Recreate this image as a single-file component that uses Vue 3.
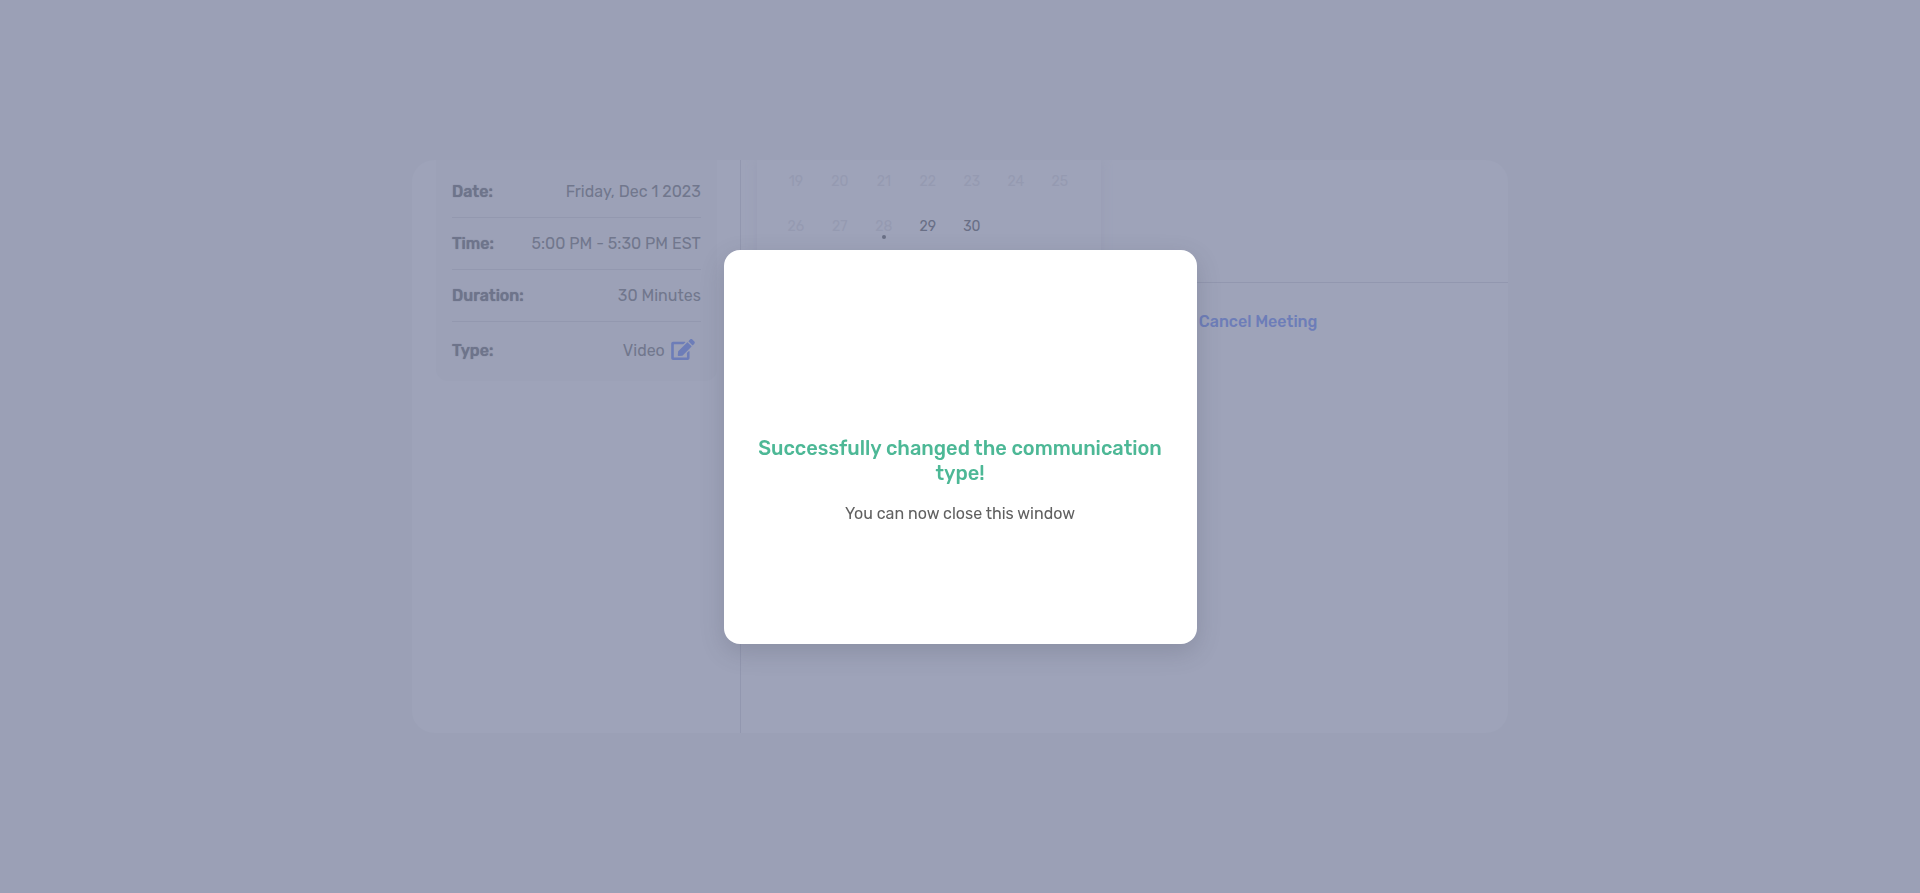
<script setup>
const details = [
  { label: 'Date:', value: 'Friday, Dec 1 2023' },
  { label: 'Time:', value: '5:00 PM - 5:30 PM EST' },
  { label: 'Duration:', value: '30 Minutes' },
  { label: 'Type:', value: 'Video', editable: true },
]

const weeks = [
  [19, 20, 21, 22, 23, 24, 25],
  [26, 27, 28, 29, 30],
]
const today = 28
</script>

<template>
  <div class="page">
    <main class="card">
      <aside class="sidebar">
        <dl class="details">
          <div v-for="row in details" :key="row.label" class="row">
            <dt>{{ row.label }}</dt>
            <dd>
              {{ row.value }}
              <button v-if="row.editable" class="edit" type="button" aria-label="Edit type">
                <svg viewBox="0 0 576 512" width="24" height="21" aria-hidden="true">
                  <path
                    fill="currentColor"
                    d="M402.6 83.2l90.2 90.2c3.800 3.800 3.800 10 0 13.800L274.400 405.600l-92.800 10.300c-12.400 1.400-22.900-9.100-21.500-21.500l10.300-92.800L388.800 83.200c3.800-3.800 10-3.800 13.800 0zm162-22.900l-48.800-48.800c-15.200-15.200-39.900-15.200-55.200 0l-35.400 35.400c-3.800 3.800-3.800 10 0 13.800l90.200 90.200c3.800 3.800 10 3.800 13.800 0l35.400-35.400c15.200-15.300 15.200-40 0-55.200zM384 346.200V448H64V128h229.800c3.200 0 6.200-1.300 8.500-3.500l40-40c7.600-7.600 2.200-20.500-8.500-20.500H48C21.500 64 0 85.500 0 112v352c0 26.500 21.500 48 48 48h352c26.500 0 48-21.500 48-48V306.200c0-10.700-12.900-16-20.500-8.500l-40 40c-2.200 2.300-3.500 5.300-3.500 8.500z"
                  />
                </svg>
              </button>
            </dd>
          </div>
        </dl>
      </aside>
      <section class="content">
        <div class="schedule">
          <table class="calendar">
            <tbody>
              <tr v-for="(week, i) in weeks" :key="i">
                <td v-for="day in week" :key="day" :class="{ open: day > today, today: day === today }">
                  {{ day }}
                </td>
              </tr>
            </tbody>
          </table>
        </div>
        <div class="actions">
          <button class="cancel" type="button">Cancel Meeting</button>
        </div>
      </section>
    </main>

    <div class="overlay">
      <div class="modal" role="dialog" aria-labelledby="modal-title">
        <h2 id="modal-title">Successfully changed the communication type!</h2>
        <p>You can now close this window</p>
      </div>
    </div>
  </div>
</template>

<style>
body {
  background: #9ba0b6;
}
</style>

<style scoped>
.page {
  box-sizing: border-box;
  min-height: 100vh;
  display: flex;
  align-items: center;
  justify-content: center;
  font-family: Rubik, Inter, Roboto, sans-serif;
  font-size: 16px;
  font-weight: 400;
  line-height: 20px;
  color: #71778d;
}

.card {
  width: 100%;
  max-width: 1096px;
  min-height: 573px;
  display: flex;
  border-radius: 22px;
  overflow: hidden;
  background: #9ea3b9;
}

.sidebar {
  box-sizing: border-box;
  flex: 0 0 30%;
  padding: 0 23px 0 24px;
  border-right: 1px solid #9297af;
}

.details {
  margin: 0;
  padding: 6px 16px 0;
  border-radius: 0 0 12px 12px;
  background: #9ca1b7;
}

.row {
  display: flex;
  align-items: center;
  justify-content: space-between;
  padding: 16px 0 15px;
  border-bottom: 1px solid #9398af;
}

.row:last-child {
  padding: 15px 0 17px;
  border-bottom: 0;
}

dt {
  font-weight: 500;
  color: #6e748b;
  text-shadow: 0 0 1px #6e748b;
}

dd {
  margin: 0;
  display: flex;
  align-items: center;
  gap: 6px;
}

.edit,
.cancel {
  border: 0;
  padding: 0;
  background: none;
  color: #6d7db8;
  font: inherit;
}

.edit {
  display: flex;
  padding: 2px 6px 4px 0;
}

.content {
  flex: 1;
}

.schedule {
  height: 122px;
  padding-left: 16px;
  border-bottom: 1px solid #9297af;
}

.calendar {
  height: 122px;
  width: 344px;
  box-sizing: border-box;
  display: block;
  padding: 0 17px;
  border-spacing: 0;
  background: #9ea3b9;
  box-shadow: 0 0 10px #989db4;
  font-size: 14px;
}

.calendar td {
  position: relative;
  width: 44px;
  height: 45px;
  box-sizing: border-box;
  padding: 0 0 2px;
  text-align: center;
  color: #959ab1;
}

.calendar td.open {
  color: #696f86;
}

.calendar td.today::after {
  content: '';
  position: absolute;
  left: 50%;
  bottom: 11px;
  width: 4px;
  height: 4px;
  margin-left: -2px;
  border-radius: 50%;
  background: #696f86;
}

.actions {
  padding: 29px 0 0 458px;
}

.cancel {
  font-weight: 500;
}

.overlay {
  position: fixed;
  inset: 0;
  display: flex;
  align-items: center;
  justify-content: center;
}

.modal {
  box-sizing: border-box;
  width: 473px;
  max-width: 100%;
  min-height: 394px;
  padding: 186px 24px 120px;
  border-radius: 16px;
  background: #fff;
  box-shadow: 0 8px 24px rgba(60, 65, 80, 0.2);
  text-align: center;
}

h2 {
  margin: 0 0 18px;
  font-size: 20px;
  line-height: 25px;
  font-weight: 500;
  color: #4db896;
}

p {
  margin: 0;
  color: #606060;
}
</style>
